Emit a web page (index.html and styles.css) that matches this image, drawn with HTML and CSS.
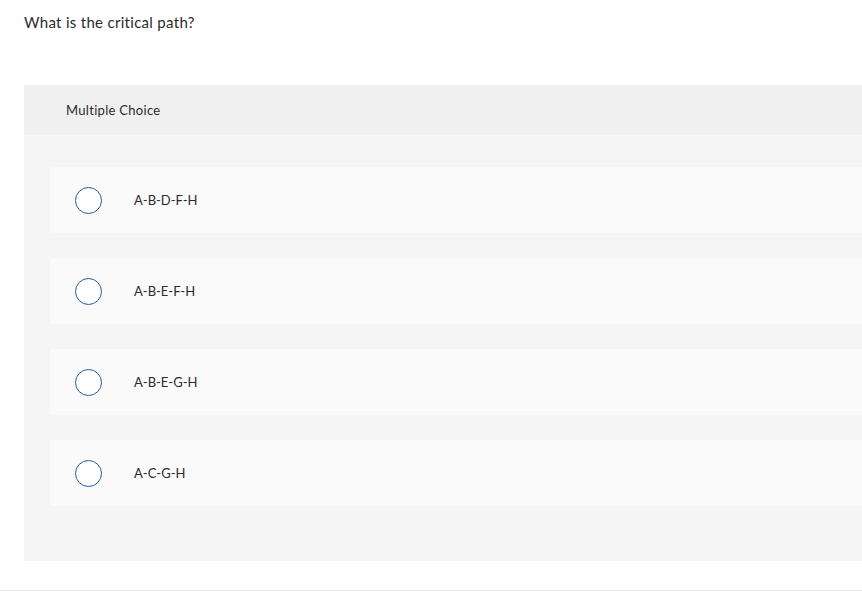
FILE: index.html
```html
<!DOCTYPE html>
<html>
<head>
<meta charset="utf-8">
<link rel="stylesheet" href="styles.css">
</head>
<body>
<div class="page">
  <h1 class="question">What is the critical path?</h1>
  <section class="panel">
    <div class="panel-head">Multiple Choice</div>
    <div class="panel-body">
      <label class="option"><span class="radio"></span><span class="label">A-B-D-F-H</span></label>
      <label class="option"><span class="radio"></span><span class="label">A-B-E-F-H</span></label>
      <label class="option"><span class="radio"></span><span class="label">A-B-E-G-H</span></label>
      <label class="option"><span class="radio"></span><span class="label">A-C-G-H</span></label>
    </div>
  </section>
  <div class="rule"></div>
</div>
</body>
</html>
```
FILE: styles.css
```css
html, body {
  margin: 0;
  padding: 0;
  background: #fff;
}
.page {
  font-family: Lato, "Open Sans", Arial, sans-serif;
  color: #333;
  width: 862px;
  height: 594px;
  overflow: hidden;
  position: relative;
  letter-spacing: 0.3px;
}
.question {
  margin: 0;
  padding: 12px 0 0 24px;
  font-size: 15px;
  font-weight: 400;
  line-height: 20px;
  height: 72px;
  box-sizing: border-box;
  color: #2b2b2b;
}
.panel {
  margin-top: 13px;
  margin-left: 24px;
  background: #f5f5f5;
  border-radius: 3px 0 0 3px;
}
.panel-head {
  height: 50px;
  background: #f0f0f0;
  border-radius: 3px 0 0 0;
  display: flex;
  align-items: center;
  padding-left: 42px;
  font-size: 13px;
  color: #2b2b2b;
}
.panel-body {
  padding: 32px 0 55px 26px;
  display: flex;
  flex-direction: column;
  gap: 25px;
}
.option {
  height: 66px;
  background: #fafafa;
  border-radius: 3px 0 0 3px;
  display: flex;
  align-items: center;
  padding-left: 25px;
}
.radio {
  width: 25px;
  height: 25px;
  border: 1.5px solid #1f5d9c;
  border-radius: 50%;
  background: #fff;
  flex: none;
}
.label {
  margin-left: 32px;
  font-size: 13px;
  letter-spacing: 0;
  color: #2b2b2b;
}
.rule {
  position: absolute;
  left: 0;
  right: 0;
  top: 590px;
  height: 1px;
  background: #ebebeb;
}
```
